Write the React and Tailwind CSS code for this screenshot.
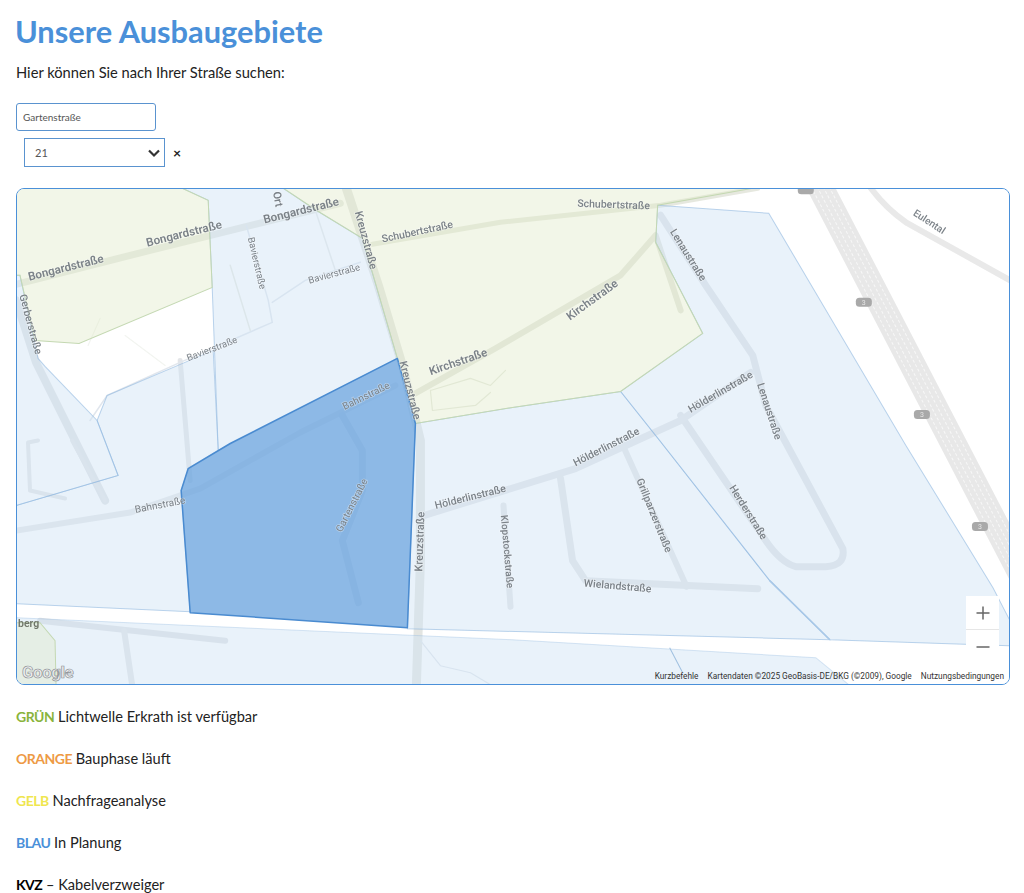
const roads = [
  { d: "M16 284 L150 250 L340 203", w: 7, c: "#dcdfd8" },
  { d: "M346 188 L378 285 L402 365 L420 440 L420 560 L416 684", w: 9, c: "#d8dbd6" },
  { d: "M372 244 L500 222 L660 205 L757 188", w: 5, c: "#dcdfd2" },
  { d: "M415 393 L495 348 L620 275 L655 235 L680 310", w: 6, c: "#d8dcd2" },
  { d: "M660 215 L705 285 L752 355 L765 405 L800 470 L842 548 Q845 565 825 566 L795 566 Q780 562 765 540 L680 415", w: 7, c: "#d6dade" },
  { d: "M420 516 L575 468 L680 420 L750 372", w: 7, c: "#d9dce0" },
  { d: "M16 530 L130 512 L200 488 L300 432 L395 385", w: 6, c: "#dcdfe2" },
  { d: "M342 415 L362 450 L362 490 L342 540 L358 602", w: 7, c: "#d2d6dc" },
  { d: "M16 300 L36 362 L105 500", w: 8, c: "#d5d8dc" },
  { d: "M180 360 L190 480", w: 5, c: "#d8dbdf" },
  { d: "M503 505 L510 606", w: 6, c: "#d8dbde" },
  { d: "M620 440 L686 586", w: 6, c: "#d8dbde" },
  { d: "M560 478 L572 560 L585 580 L757 588", w: 7, c: "#d8dbde" },
  { d: "M40 620 L225 640", w: 6, c: "#d4d7db" },
  { d: "M124 630 L132 684", w: 6, c: "#d8dbde" },
  { d: "M38 440 L28 442 L30 490 L65 498", w: 4, c: "#d8dbde" },
  { d: "M72 440 L105 500", w: 4, c: "#d8dbde" },
  { d: "M870 188 Q885 208 905 222 L1009 280", w: 6, c: "#e0e0e0" },
  { d: "M230 265 L250 330", w: 1.5, c: "#dde1d6" },
  { d: "M246 225 L268 300 L272 322 L180 362 L107 395 L90 420", w: 1.5, c: "#d4dce6" },
  { d: "M272 302 L305 280 L360 262", w: 1.5, c: "#d4dce6" },
  { d: "M315 210 L335 270", w: 1.5, c: "#dde1e0" },
  { d: "M100 318 L88 345 M125 335 L165 365", w: 1.2, c: "#edf0ea" },
  { d: "M430 390 L470 378 L490 385 L505 370 M430 390 L432 410 L475 405 L490 392", w: 1.2, c: "#d8ddd0" },
  { d: "M420 640 L440 665 L470 672 L490 684", w: 1.2, c: "#d4dbe4" },
];

const labels = [
  ["Bongardstraße", 66, 268, -14, 11.6, 600],
  ["Bongardstraße", 184, 234, -14, 11.6, 600],
  ["Bongardstraße", 301, 211, -14, 11.6, 600],
  ["Ort", 277, 199, 80, 11, 600],
  ["Kreuzstraße", 365, 240, 75, 11, 500],
  ["Kreuzstraße", 409, 390, 76, 11, 500],
  ["Kreuzstraße", 420, 541, -88, 11, 500],
  ["Schubertstraße", 417, 232, -12, 10.5, 500],
  ["Schubertstraße", 613, 205, 2, 10.5, 500],
  ["Kirchstraße", 458, 362, -19, 11.6, 600],
  ["Kirchstraße", 592, 300, -36, 11.6, 600],
  ["Lenaustraße", 687, 255, 58, 10.5, 500],
  ["Lenaustraße", 768, 411, 72, 10.5, 500],
  ["Hölderlinstraße", 720, 392, -30, 10.5, 500],
  ["Hölderlinstraße", 606, 447, -27, 10.5, 500],
  ["Hölderlinstraße", 470, 497, -14, 10.5, 500],
  ["Herderstraße", 747, 512, 58, 10.5, 500],
  ["Grillparzerstraße", 653, 515, 68, 10.5, 500],
  ["Klopstockstraße", 506, 551, 85, 10, 500],
  ["Wielandstraße", 617, 586, 5, 10.5, 500],
  ["Eulental", 928, 222, 33, 10, 500],
  ["Bavierstraße", 256, 263, 77, 9.5, 400],
  ["Bavierstraße", 334, 274, -15, 9.5, 400],
  ["Bavierstraße", 212, 349, -21, 9.5, 400],
  ["Bahnstraße", 366, 396, -26, 10, 400],
  ["Bahnstraße", 160, 505, -11, 10, 400],
  ["Gartenstraße", 352, 505, -63, 10, 400],
  ["Gerberstraße", 30, 324, 75, 10.5, 500],
];

const shields = [[863, 302], [921, 414], [979, 526]];

function MapDrawing() {
  return (
    <svg viewBox="17 189 991 494" className="block h-full w-full bg-white blur-[0.4px]">
      <g opacity="0.7">
        {roads.map((r, i) => (
          <path key={i} d={r.d} fill="none" stroke={r.c} strokeWidth={r.w} strokeLinejoin="round" strokeLinecap="round" />
        ))}
      </g>
      <path d="M817 182 L1035 602" fill="none" stroke="#e8e8e8" strokeWidth="26" />
      <path d="M808 182 L1026 602 M814 182 L1032 602 M820 182 L1038 602 M826 182 L1044 602" fill="none" stroke="#f7f7f7" strokeWidth="1" strokeDasharray="3 2" />
      <rect x="797" y="185" width="16" height="9" rx="3.5" fill="#a9a9a9" />
      {shields.map(([x, y]) => (
        <g key={x}>
          <rect x={x - 8} y={y - 4.5} width="16" height="9" rx="3.5" fill="#a9a9a9" />
          <text x={x} y={y + 2.5} textAnchor="middle" fontSize="7" fill="#e6e6e6" fontFamily="Roboto, sans-serif">3</text>
        </g>
      ))}

      <g fill="#cfe2f5" fillOpacity="0.45" stroke="#8fb8df" strokeOpacity="0.6" strokeWidth="1">
        <path d="M182 188 L283 188 L316 210 L362 238 L397 358 L218 450 L212 287 L208 200 Z" />
        <path d="M107 395 L213 350 L218 450 L189 467 L181 490 L190 611 L16 603 L16 505 L118 475 L97 420 Z" />
        <path d="M16 275 L20 275 L38 358 L45 366 L97 420 L118 475 L16 505 Z" />
        <path d="M415 423 L512 407 L620 391 L659 440 L769 580 L829 639 L407 628 Z" />
        <path d="M620 391 L702 333 L655 242 L657 205 L768 213 L905 445 L992 587 L1009 620 L1009 645 L829 639 L769 580 L659 440 Z" />
        <path d="M16 617 L512 639 L815 657 L848 684 L16 684 Z" strokeOpacity="0.35" />
      </g>
      <path d="M669 647 L682 672" stroke="#9fc0e0" strokeWidth="1" fill="none" />
      <path d="M769 580 L829 639" stroke="#a8c8e8" strokeWidth="1.6" fill="none" />

      <g fill="#dfeac8" fillOpacity="0.42" stroke="#c4d8b2" strokeWidth="1">
        <path d="M16 188 L182 188 L208 200 L212 287 L79 343 L35 340 L20 275 L16 275 Z" />
        <path d="M283 188 L752 188 L657 205 L655 242 L702 333 L620 391 L512 407 L415 423 L397 358 L362 238 L316 210 Z" />
        <path d="M16 622 L40 622 L55 640 L56 684 L16 684 Z" />
      </g>

      <path
        d="M397 358 L415 423 L407 627 L190 612 L181 490 L188 468 L230 443 Z"
        fill="#74a9e0"
        fillOpacity="0.82"
        stroke="#4a8bd0"
        strokeWidth="1.5"
        strokeLinejoin="round"
      />

      {labels.map(([t, x, y, rot, size, weight], i) => (
        <text
          key={i}
          transform={`translate(${x} ${y}) rotate(${rot})`}
          textAnchor="middle"
          dominantBaseline="middle"
          fontSize={size}
          fontWeight={weight}
          fontFamily="Roboto, sans-serif"
          fill="#7b8288"
          stroke="#ffffff"
          strokeOpacity="0.35"
          strokeWidth="1.5"
          paintOrder="stroke"
        >
          {t}
        </text>
      ))}
      <text x="18" y="626" fontSize="10.5" fontWeight="600" fontFamily="Roboto, sans-serif" fill="#70766a">berg</text>
    </svg>
  );
}

const legend = [
  ["GRÜN", "text-[#8ab43c]", " Lichtwelle Erkrath ist verfügbar"],
  ["ORANGE", "text-[#ee9a45]", " Bauphase läuft"],
  ["GELB", "text-[#efe650]", " Nachfrageanalyse"],
  ["BLAU", "text-[#4a90d9]", " In Planung"],
  ["KVZ", "text-black", " – Kabelverzweiger"],
];

export default function App() {
  return (
    <div className="h-[893px] overflow-hidden bg-white px-4 text-[#222222] font-['Lato',sans-serif]">
      <h1 className="-ml-px pt-3 text-[30.8px] leading-[40px] font-bold text-[#4a90d9]">
        Unsere Ausbaugebiete
      </h1>
      <p className="mt-[10px] text-[14.7px] leading-[20px]">Hier können Sie nach Ihrer Straße suchen:</p>

      <input
        readOnly
        value="Gartenstraße"
        className="mt-[21px] block h-7 w-[140px] rounded-[3px] border border-[#5a93cf] bg-white px-[6px] text-[10px] text-[#555555] outline-none"
      />
      <div className="ml-2 mt-[7px] flex h-[29px] items-center gap-[8px]">
        <div className="flex h-full w-[141px] items-center justify-between border border-[#5a93cf] bg-white pl-[10px] pr-[3px] text-[11px] text-[#555555]">
          <span className="pt-px">21</span>
          <svg width="14" height="14" viewBox="0 0 14 14" fill="none" stroke="#333333" strokeWidth="2.2">
            <path d="M2 4.5 L7 9.5 L12 4.5" />
          </svg>
        </div>
        <span className="text-[14px] font-bold leading-none">×</span>
      </div>

      <div className="relative mt-[21px] h-[497px] w-[994px] overflow-hidden rounded-lg border border-[#4a90d9]">
        <MapDrawing />
        <div className="absolute bottom-[2px] left-[5px] text-[17px] font-bold leading-[20px] tracking-[-0.5px] text-[#eeeeee] font-['Roboto',sans-serif] [-webkit-text-stroke:0.7px_#8e9398]">
          Google
        </div>
        <div className="absolute right-[10px] top-[407px] flex w-[33px] flex-col bg-white">
          <div className="flex h-[34px] items-center justify-center border-b border-[#e6e6e6]">
            <svg width="16" height="16" viewBox="0 0 16 16" stroke="#666666" strokeWidth="1.5"><path d="M1.5 8 H14.5 M8 1.5 V14.5" /></svg>
          </div>
          <div className="flex h-[34px] items-center justify-center">
            <svg width="16" height="16" viewBox="0 0 16 16" stroke="#666666" strokeWidth="1.5"><path d="M1.5 8 H14.5" /></svg>
          </div>
        </div>
        <div className="absolute bottom-[2px] right-[5px] flex gap-[9px] text-[8.3px] leading-[11px] text-[#333333] font-['Roboto',sans-serif]">
          <span>Kurzbefehle</span>
          <span>Kartendaten ©2025 GeoBasis-DE/BKG (©2009), Google</span>
          <span>Nutzungsbedingungen</span>
        </div>
      </div>

      <div className="mt-[22px] flex flex-col gap-[22px] text-[14.6px] leading-[20px]">
        {legend.map(([k, c, t]) => (
          <p key={k}>
            <strong className={`text-[14px] font-bold tracking-[-0.5px] ${c}`}>{k}</strong>
            {t}
          </p>
        ))}
      </div>
    </div>
  );
}
